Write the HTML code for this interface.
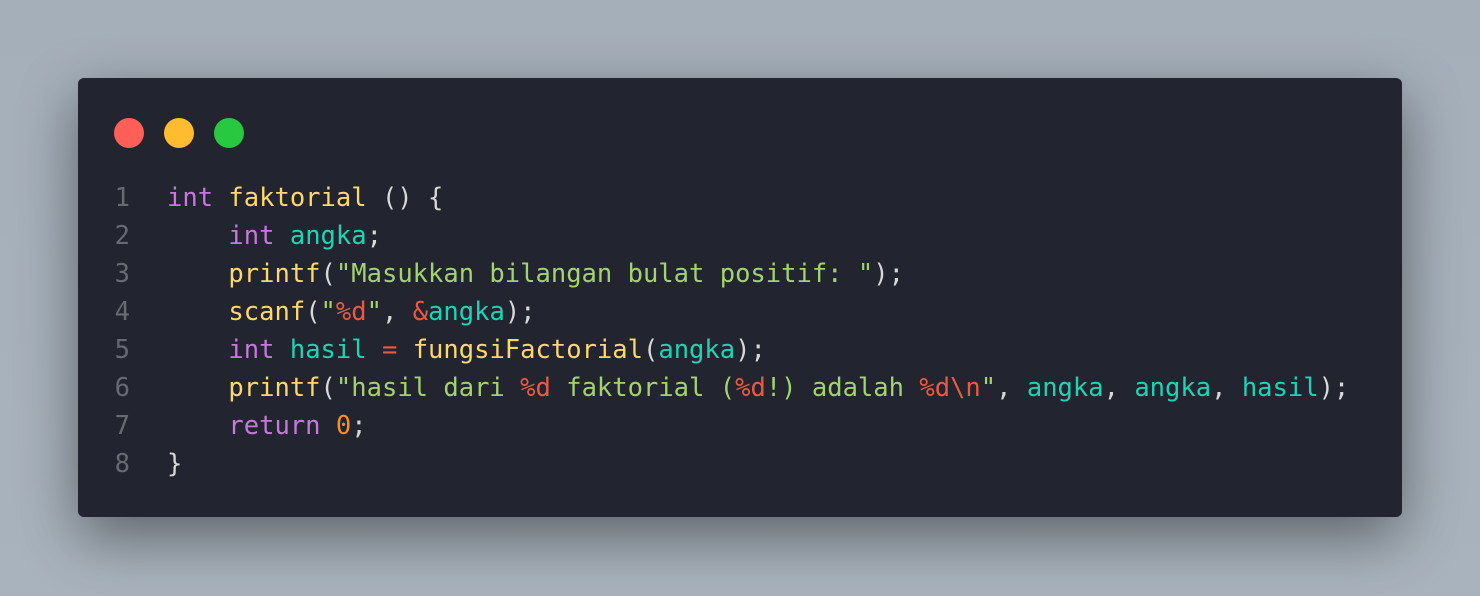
<!DOCTYPE html>
<html><head><style>
html,body{margin:0;padding:0;width:1480px;height:596px;overflow:hidden}
body{background:linear-gradient(180deg,#a5afba 0%,#a9b3bd 100%);position:relative}
.win{position:absolute;left:78px;top:78px;width:1324px;height:439px;background:#22252f;border-radius:6px;box-shadow:0 20px 60px rgba(0,0,0,.45)}
.dot{position:absolute;top:40px;width:30px;height:30px;border-radius:50%}
pre{position:absolute;left:0;top:101px;margin:0;font-family:"DejaVu Sans Mono","Liberation Mono",monospace;font-size:25.5px;line-height:38px;color:#d8d8d8}
.ln{display:inline-block;width:52px;text-align:right;color:#676a72;margin-right:37px}
.k{color:#c678dd}.f{color:#fdd86c}.v{color:#1fd4b6}.s{color:#a3d36f}.e{color:#ea5a40}.n{color:#f4902e}
</style></head><body>
<div class="win">
<div class="dot" style="left:36px;background:#ff5f57"></div>
<div class="dot" style="left:86px;background:#febc2e"></div>
<div class="dot" style="left:136px;background:#28c840"></div>
<pre><span class="ln">1</span><span class="k">int</span> <span class="f">faktorial</span> () {
<span class="ln">2</span>    <span class="k">int</span> <span class="v">angka</span>;
<span class="ln">3</span>    <span class="f">printf</span>(<span class="s">"Masukkan bilangan bulat positif: "</span>);
<span class="ln">4</span>    <span class="f">scanf</span>(<span class="s">"</span><span class="e">%d</span><span class="s">"</span>, <span class="e">&amp;</span><span class="v">angka</span>);
<span class="ln">5</span>    <span class="k">int</span> <span class="v">hasil</span> <span class="e">=</span> <span class="f">fungsiFactorial</span>(<span class="v">angka</span>);
<span class="ln">6</span>    <span class="f">printf</span>(<span class="s">"hasil dari </span><span class="e">%d</span><span class="s"> faktorial (</span><span class="e">%d</span><span class="s">!) adalah </span><span class="e">%d\n</span><span class="s">"</span>, <span class="v">angka</span>, <span class="v">angka</span>, <span class="v">hasil</span>);
<span class="ln">7</span>    <span class="k">return</span> <span class="n">0</span>;
<span class="ln">8</span>}</pre>
</div>
</body></html>
